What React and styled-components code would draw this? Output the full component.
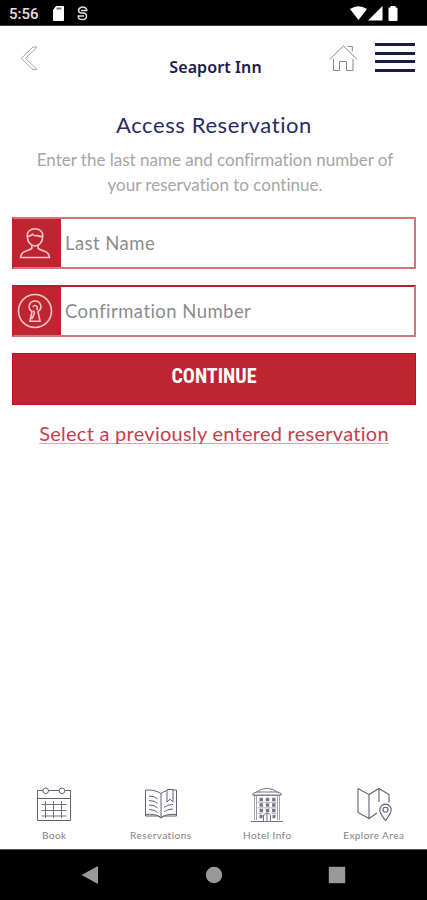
import React from 'react';
import styled, { createGlobalStyle } from 'styled-components';

const Global = createGlobalStyle`
  * { box-sizing: border-box; }
  html, body { margin: 0; padding: 0; background: #fff; }
  body { font-family: Lato, sans-serif; color: #1b1a4b; font-variant-ligatures: none; }
  svg { display: block; flex: none; }
`;
const Screen = styled.div`
  width: 427px; height: 900px; display: flex; flex-direction: column;
  background: #fefefe; overflow: hidden;
`;
const StatusBar = styled.div`
  height: 26px; flex: none; background: #000; border-bottom: 1px solid #3c3c3c;
  display: flex; justify-content: space-between; padding: 6px 29px 0 9px;
`;
const StatusGroup = styled.div`display: flex; align-items: flex-start;`;
const Clock = styled.span`
  font: 500 15px/16px Roboto, sans-serif; color: #e0e0e0; width: 43px; letter-spacing: 0;
`;
const StatusSlot = styled.span`margin-left: ${p => p.$gap}px;`;
const Header = styled.header`
  height: 76px; flex: none; display: grid; grid-template-columns: 115px 1fr 115px;
  align-items: start;
`;
const IconButton = styled.button`
  border: 0; background: none; padding: 0; margin: ${p => p.$margin}; display: block;
`;
const HotelName = styled.h1`
  margin: 31px 0 0 4px; text-align: center; white-space: nowrap;
  font: 600 16px/20px "Noto Sans", sans-serif; letter-spacing: 0.1px; color: #1b1a4b;
`;
const Actions = styled.div`display: flex;`;
const Menu = styled.button`
  border: 0; background: none; padding: 0; margin: 17px 0 0 17px; width: 41px;
  display: flex; flex-direction: column; gap: 5.7px;
`;
const MenuLine = styled.span`display: block; height: 3px; width: 40px; background: #1b1a48;`;
const Main = styled.main`flex: 1; padding: 9px 11px 0 12px;`;
const Title = styled.h2`
  margin: 0; text-align: center; font-weight: 400; font-size: 22px; line-height: 28px;
  letter-spacing: 0.6px; color: #2b2a60;
`;
const Intro = styled.p`
  margin: 8px 0 0 2px; text-align: center; font-size: 17px; line-height: 25px; color: #a6a6a6;
  letter-spacing: 0; white-space: nowrap;
`;
const Field = styled.label`
  display: flex; height: 52px; border: 2px solid #d4757c; border-top-color: ${p => p.$top};
  border-left-color: #bf2531; margin-top: ${p => p.$gap}px; background: #fff;
`;
const FieldIcon = styled.span`
  width: 47px; padding-right: 5px; background: #bf2531; display: flex; align-items: center;
  justify-content: center; flex: none;
`;
const Input = styled.input`
  flex: 1; min-width: 0; border: 0; outline: 0; background: none; padding: 0 4px 1px;
  font: 400 18.5px Lato, sans-serif; letter-spacing: 0.45px;
  &::placeholder { color: #8c8c8c; opacity: 1; }
`;
const Continue = styled.button`
  display: block; width: 100%; height: 52px; margin-top: 16px; padding: 0 0 6px 0;
  border: 1.5px solid #bd101c; background: #bf2531; color: #fff;
  font: 700 20px/24px "Roboto Condensed", Roboto, sans-serif; letter-spacing: 0;
`;
const Previous = styled.a`
  display: block; width: max-content; margin: 16px auto 0; font-size: 20px; line-height: 25px;
  letter-spacing: 0.27px; color: #c33f4d; white-space: nowrap;
  text-decoration: underline; text-decoration-color: #e0a0a6; text-decoration-thickness: 1px;
  text-underline-offset: 2px; text-decoration-skip-ink: none;
`;
const Tabs = styled.nav`
  height: 63px; flex: none; display: grid; grid-template-columns: repeat(4, 1fr);
  padding-left: 1px; border-bottom: 1px solid #555;
`;
const Tab = styled.div`
  display: flex; flex-direction: column; align-items: center; gap: 5px;
`;
const TabLabel = styled.span`
  font: 400 10px/14px Lato, sans-serif; letter-spacing: 0.45px; color: #81818d; white-space: nowrap;
`;
const SystemBar = styled.div`
  height: 50px; flex: none; background: #000; display: flex; justify-content: space-between;
  align-items: center; padding: 0 81px 1px 81px;
`;

const navy = '#62627a';

const SdIcon = () => <svg width="13" height="15" viewBox="0 0 13 15"><path d="M4 0h7q1 0 1 1v13q0 1-1 1H2q-1 0-1-1V4z" fill="#fff"/><path d="M4.500 2.500h5" stroke="#777" strokeWidth="2"/></svg>;
const SyncIcon = () => <svg width="13" height="15" viewBox="0 0 13 15" fill="none" stroke="#dcdcdc" strokeWidth="1.500"><path d="M10.500 4V3Q9.500 1 6.500 1T2.500 4.200Q2.500 6.500 5 7H8q2.500.5 2.500 3.200Q10.500 13.500 6.500 13.500T2.500 11.500V10M5 4.500h6.500M1.500 10h6.500"/></svg>;
const WifiIcon = () => <svg width="18" height="15" viewBox="0 0 18 15"><path d="M0 3Q8.500-2.500 17 3L8.500 14z" fill="#fff"/></svg>;
const SignalIcon = () => <svg width="18" height="15" viewBox="0 0 18 15"><path d="M14.500 0v14.500H0z" fill="#fff"/></svg>;
const BatteryIcon = () => <svg width="10" height="15" viewBox="0 0 10 15"><path d="M2.500 0h5v1.500h1q1 0 1 1V14q0 1-1 1h-7q-1 0-1-1V2.500q0-1 1-1h1z" fill="#fff"/></svg>;
const BackIcon = () => <svg width="18" height="25" viewBox="0 0 18 25" fill="none" stroke="#a5a5b0" strokeWidth="1"><path d="M17.200 1H13L1.200 12.500 13 23.500h4.200L5.500 12.500z"/></svg>;
const HomeIcon = () => <svg width="29" height="27" viewBox="0 0 29 27" fill="none" stroke="#85858b" strokeWidth="1"><path d="M.7 14.500 14.500 1 28.300 14.500M18.500 1.500h4.800v5M4.500 14v11.500h6V16.500h7v9h6.500V14"/></svg>;
const PersonIcon = () => <svg width="32" height="32" viewBox="0 0 32 32" fill="none" stroke="#f7c6c8" strokeWidth="1.600" strokeLinejoin="round"><path d="M8.300 9.500C7.800 4.500 11.500 1.800 16 1.800S24.200 4.500 23.700 9.500c0 5.500-3.500 9.500-7.700 9.500s-7.700-4-7.700-9.500zM8.500 9.500q3.500-.3 5-2.300 2 2.200 4.500 1.200 2.500 1.100 5.500 1.100M12.800 18v3.500Q10.500 23 7 24 2 25.500 1.500 30.500h29Q30 25.500 25 24 21.500 23 19.200 21.500V18"/></svg>;
const KeyholeIcon = () => <svg width="36" height="36" viewBox="0 0 36 36" fill="none" stroke="#f7c6c8" strokeWidth="1.600"><circle cx="18" cy="18" r="16.500"/><path d="M15 18.500C9.800 15 12.200 8 18 8s8.200 7 3 10.500l2 9.800H13zM16.500 17.500l1 2.500-2.500 6M15.800 14q2.200-3 4.400 0v3"/></svg>;
const CalendarIcon = () => <svg width="36" height="36" viewBox="0 0 36 36" fill="none" stroke={navy} strokeWidth="1"><path d="M7 3.500H1.500v30h33v-30H29M12.500 3.500H23M1.500 11.500h33"/><circle cx="9.700" cy="3.800" r="2.800"/><circle cx="26" cy="3.800" r="2.800"/><path d="M9.500 14v17M17.500 14v17M25.500 14v17M5.500 17.500h25M5.500 23.500h25M5.500 29h25" strokeWidth=".9"/></svg>;
const BookIcon = () => <svg width="36" height="36" viewBox="0 0 36 36" fill="none" stroke={navy} strokeWidth="1"><path d="M18 6.500Q12 2.500 2.500 3v24.500q10-1 15.500 2.800Q24 26.500 33.500 27.500V3H30M18 6.500v23M18 6.500q2.500-2 6-3M24 3v12l3-2.800 3 2.800V2.500h-6M2.500 27.500v1.500h12.500l3 2 3-2h12.500v-1.500M6 9q6 0 8.500 3M6 13.500q6 0 8.500 3M6 18q6 0 8.500 3M6 22.500q6 0 8.500 3M21 20.500q3-3 9-3M21 25q3-3 9-3"/></svg>;
const HotelIcon = () => <svg width="36" height="36" viewBox="0 0 36 36" fill="none" stroke={navy} strokeWidth=".9"><path d="M5.500 33V8.500h25V33M7.500 33V9M28.500 33V9" stroke="#9696a6"/><path d="M2 34.500h32M4 8.500V6.500Q9 5 12 2.500q6-2.500 12 0Q27 5 32 6.500v2M7.500 5h21M4 8h28M14.500 34v-6q3.500-4 7 0v6M18 26v8"/><path d="M10.500 12.500H27M10.500 18H27M10.500 23.500H27M10.500 29.500h3M23.500 29.500h3" stroke="#77778c" strokeWidth="3.300" strokeDasharray="3.500 2.800"/><path d="M8.500 15.300h19M8.500 20.800h19M8.500 26.300h5M22.500 26.300h5" stroke="#aaaab6"/></svg>;
const MapIcon = () => <svg width="36" height="36" viewBox="0 0 36 36" fill="none" stroke={navy} strokeWidth="1.100"><path d="M2 1.500v24L13 31.500V7.500L2 1.500M13 7.500 23 1.500l10 6v8M13 31.500l8-5.500M23 2v13"/><path d="M29.500 33.500c-3.500-5-5.700-7.300-5.700-10.700a5.700 5.700 0 0 1 11.400 0c0 3.400-2.200 5.700-5.700 10.700z"/><circle cx="29.500" cy="22.800" r="2.500"/></svg>;

const tabs = [
  ['Book', CalendarIcon],
  ['Reservations', BookIcon],
  ['Hotel Info', HotelIcon],
  ['Explore Area', MapIcon],
];

export default function App() {
  return (
    <Screen>
      <Global />
      <StatusBar>
        <StatusGroup><Clock>5:56</Clock><SdIcon /><StatusSlot $gap={11}><SyncIcon /></StatusSlot></StatusGroup>
        <StatusGroup><WifiIcon /><SignalIcon /><StatusSlot $gap={2}><BatteryIcon /></StatusSlot></StatusGroup>
      </StatusBar>
      <Header>
        <IconButton $margin="20px 0 0 20px" aria-label="Back"><BackIcon /></IconButton>
        <HotelName>Seaport Inn</HotelName>
        <Actions>
          <IconButton $margin="19px 0 0 17px" aria-label="Home"><HomeIcon /></IconButton>
          <Menu aria-label="Menu"><MenuLine /><MenuLine /><MenuLine /><MenuLine /></Menu>
        </Actions>
      </Header>
      <Main>
        <Title>Access Reservation</Title>
        <Intro>Enter the last name and confirmation number of<br />your reservation to continue.</Intro>
        <Field $gap={20} $top="#d4757c"><FieldIcon><PersonIcon /></FieldIcon><Input placeholder="Last Name" /></Field>
        <Field $gap={16} $top="#b2222d"><FieldIcon><KeyholeIcon /></FieldIcon><Input placeholder="Confirmation Number" /></Field>
        <Continue>CONTINUE</Continue>
        <Previous>Select a previously entered reservation</Previous>
      </Main>
      <Tabs>
        {tabs.map(([label, Icon]) => (
          <Tab key={label}><Icon /><TabLabel>{label}</TabLabel></Tab>
        ))}
      </Tabs>
      <SystemBar>
        <svg width="18" height="20" viewBox="0 0 18 20"><path d="M17 1v18L.5 10z" fill="#999" /></svg>
        <svg width="18" height="18" viewBox="0 0 18 18"><circle cx="9" cy="9" r="8.200" fill="#999" /></svg>
        <svg width="18" height="18" viewBox="0 0 18 18"><path d="M.8.800h16.400v16.400H.8z" fill="#999" /></svg>
      </SystemBar>
    </Screen>
  );
}
